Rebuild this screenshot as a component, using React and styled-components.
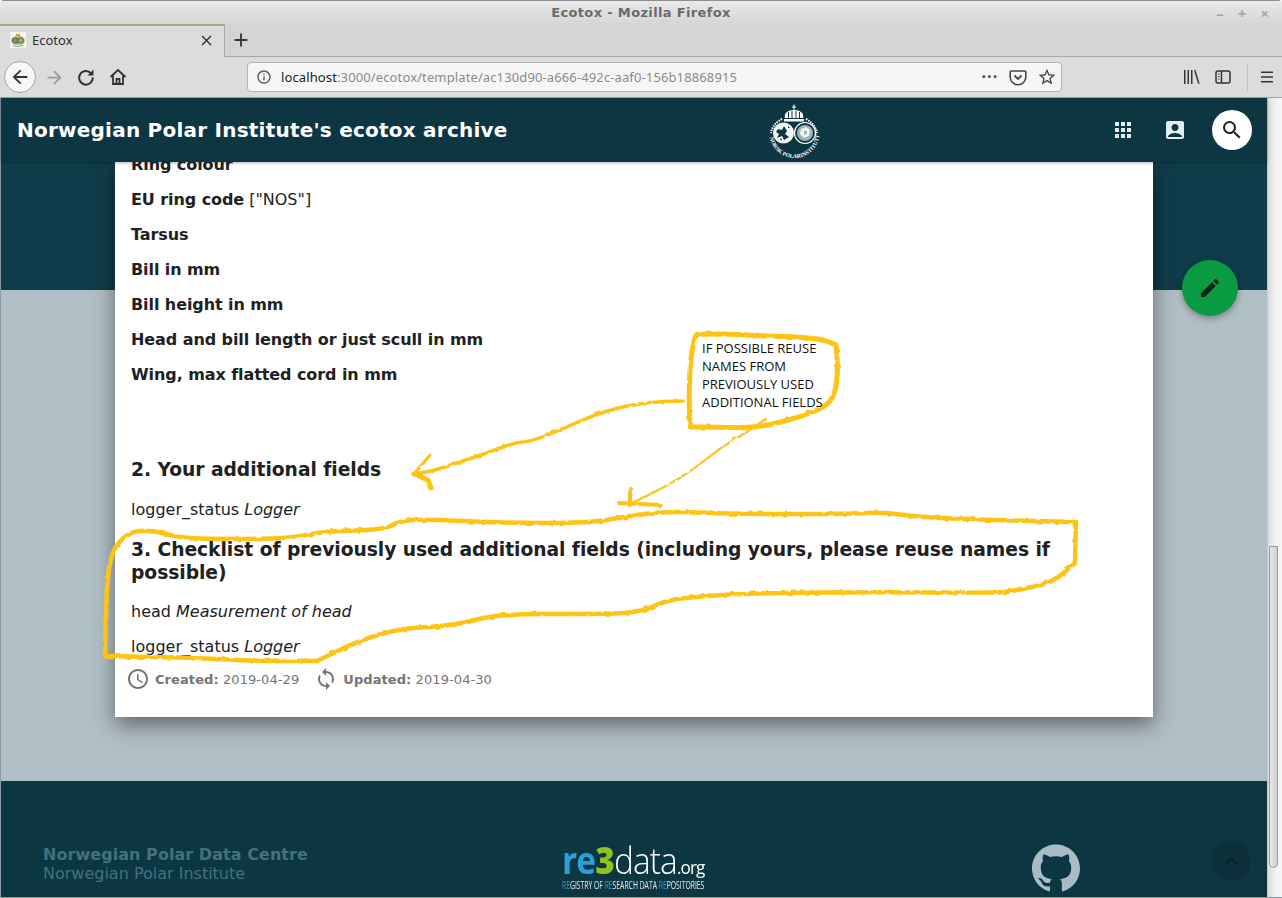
import React from 'react';
import styled, { createGlobalStyle } from 'styled-components';
import { MdApps, MdAccountBox, MdSearch, MdEdit, MdAccessTime, MdSync, MdExpandLess, MdClose, MdAdd, MdArrowBack, MdArrowForward, MdInfoOutline, MdStarBorder } from 'react-icons/md';
import { SiGithub } from 'react-icons/si';

/* -------------------------  STYLES ------------------------- */

const GlobalStyle = createGlobalStyle`
  html, body {
    margin: 0;
    padding: 0;
    background: #fff;
    overflow: hidden;
  }
`;

const Window = styled.div`
  width: 1282px;
  height: 898px;
  box-sizing: border-box;
  display: flex;
  flex-direction: column;
  overflow: hidden;
  border-radius: 4px 4px 0 0;
  border-bottom: 1px solid #8d9aa0;
  font-family: "DejaVu Sans", sans-serif;
`;

const TitleBar = styled.div`
  height: 24px;
  display: flex;
  align-items: center;
  justify-content: center;
  position: relative;
  background: linear-gradient(#e9e9e9, #d6d6d6);
  border-top: 1px solid #8f8f8f;
  box-sizing: border-box;
`;

const TitleText = styled.span`
  font: bold 13px "DejaVu Sans", sans-serif;
  letter-spacing: 0.35px;
  color: #6a6a6a;
`;

const WindowButtons = styled.div`
  position: absolute;
  right: 13px;
  top: 2px;
  display: flex;
  gap: 14px;
  color: #a5a5a5;
  font: bold 15px "Noto Sans", sans-serif;
`;

const TabBar = styled.div`
  height: 33px;
  display: flex;
  align-items: stretch;
  background: #d4d4d4;
  border-bottom: 1px solid #a8a8a8;
  box-sizing: border-box;
`;

const Tab = styled.div`
  width: 225px;
  height: 33px;
  box-sizing: border-box;
  display: flex;
  align-items: center;
  padding: 0 9px 3px 10px;
  gap: 6px;
  background: #dcdcdc;
  border-top: 2px solid #9db08e;
  border-right: 1px solid #a8a8a8;
  font: 13px "Noto Sans", sans-serif;
  color: #303030;
`;

const TabLabel = styled.span`
  flex: 1;
`;

const NewTab = styled.div`
  width: 32px;
  display: flex;
  align-items: center;
  justify-content: center;
  color: #333;
`;

const NavBar = styled.div`
  height: 41px;
  display: flex;
  align-items: center;
  background: #dcdcdc;
  border-bottom: 1px solid #a3a3a3;
  box-sizing: border-box;
  padding-left: 4px;
`;

const BackButton = styled.div`
  width: 32px;
  height: 32px;
  margin-right: 2px;
  border-radius: 50%;
  box-sizing: border-box;
  background: #f7f7f7;
  border: 1px solid #a5a5a5;
  display: flex;
  align-items: center;
  justify-content: center;
  color: #333;
`;

const NavIcon = styled.div`
  width: 32px;
  display: flex;
  align-items: center;
  justify-content: center;
  color: ${(p) => (p.$muted ? '#9a9a9a' : '#333')};
`;

const UrlBar = styled.div`
  width: 815px;
  height: 30px;
  margin-left: 113px;
  box-sizing: border-box;
  display: flex;
  align-items: center;
  padding: 0 4px 0 8px;
  background: #f6f6f6;
  border: 1px solid #b4b4b4;
  border-radius: 4px;
  font: 13px "Noto Sans", sans-serif;
  color: #8a8a8a;
`;

const UrlText = styled.span`
  flex: 1;
  margin-left: 9px;
  letter-spacing: 0.12px;
  b {
    font-weight: 400;
    color: #222;
  }
`;

const UrlActions = styled.div`
  display: flex;
  align-items: center;
  gap: 10px;
  color: #444;
`;

const Dots = styled.span`
  font: bold 8px "DejaVu Sans", sans-serif;
  letter-spacing: 0.5px;
  color: #555;
  margin-right: 1px;
`;

const ToolIcons = styled.div`
  display: flex;
  align-items: center;
  margin-left: 121px;
  gap: 15px;
  color: #333;
`;

const Separator = styled.div`
  width: 1px;
  height: 28px;
  background: #c2c2c2;
  margin: 0 -3px 0 1px;
`;

const Viewport = styled.div`
  height: 799px;
  display: flex;
  position: relative;
`;

const Main = styled.div`
  flex: 1;
  min-width: 0;
  display: flex;
  flex-direction: column;
  border-left: 1px solid #8d9aa0;
`;

const AppBar = styled.header`
  height: 64px;
  flex: none;
  position: relative;
  z-index: 2;
  display: flex;
  align-items: center;
  background: #0d3643;
  box-shadow: 0 1px 3px rgba(0, 0, 0, 0.3);
  padding-left: 16px;
`;

const AppTitle = styled.div`
  width: 751px;
  font-size: 20px;
  font-weight: 700;
  color: #fff;
  letter-spacing: 0.23px;
`;

const AppActions = styled.div`
  display: flex;
  align-items: center;
  margin-left: 289px;
  color: #e4edf0;
  gap: 28px;
`;

const SearchButton = styled.div`
  width: 40px;
  height: 40px;
  margin-left: -3px;
  border-radius: 50%;
  background: #fff;
  color: #222;
  display: flex;
  align-items: center;
  justify-content: center;
`;

const Body = styled.main`
  flex: 1;
  background: linear-gradient(#0f3c4a 128px, #b0bec5 128px);
`;

const Card = styled.article`
  width: 1038px;
  height: 555px;
  margin-left: 114px;
  box-sizing: border-box;
  padding: 0 16px;
  overflow: hidden;
  background: #fff;
  color: #212121;
  box-shadow: 0 8px 20px rgba(0, 0, 0, 0.45);
  font-size: 16px;
`;

const FieldList = styled.div`
  margin-top: -15px;
`;

const Field = styled.div`
  height: 35px;
  display: flex;
  align-items: center;
  white-space: pre;
  b {
    font-weight: 700;
    letter-spacing: -0.08px;
  }
  i {
    font-style: italic;
  }
`;

const SectionTitle = styled.h2`
  margin: ${(p) => p.$top}px 0 ${(p) => p.$bottom}px;
  font-size: 18.72px;
  line-height: 23px;
  font-weight: 700;
  letter-spacing: -0.05px;
`;

const Meta = styled.div`
  margin: 0 0 0 -5px;
  height: 30px;
  display: flex;
  align-items: center;
  font-size: 13px;
  letter-spacing: 0.08px;
  color: #757575;
  b {
    font-weight: 700;
  }
`;

const MetaItem = styled.div`
  display: flex;
  align-items: center;
  gap: 5px;
  margin-right: 15px;
  white-space: pre;
`;

const Footer = styled.footer`
  height: 116px;
  flex: none;
  box-sizing: border-box;
  overflow: hidden;
  background: #0d3643;
  display: grid;
  grid-template-columns: 519px 470px auto;
  padding: 64px 0 0 42px;
  color: #44707f;
`;

const FooterText = styled.div`
  font-size: 16px;
  line-height: 19px;
  b {
    display: block;
    font-weight: 700;
    letter-spacing: 0.05px;
  }
`;

const Re3Logo = styled.div`
  width: 144px;
  margin-top: -1px;
  color: #fff;
`;

const Re3Word = styled.div`
  height: 32px;
  display: flex;
  align-items: baseline;
  font-family: "Open Sans", sans-serif;
  font-size: 37px;
  line-height: 32px;
  letter-spacing: -1px;
  transform: scaleX(0.905);
  transform-origin: 0 0;
`;

const Re3Part = styled.span`
  color: ${(p) => p.$color || '#fff'};
  font-weight: ${(p) => p.$weight || 300};
  font-size: ${(p) => p.$size || 37}px;
`;

const Re3Caption = styled.div`
  font: 10px "Open Sans", sans-serif;
  white-space: nowrap;
  transform: scaleX(0.68);
  transform-origin: 0 0;
  margin-top: 2px;
  color: #e6eef0;
  span {
    color: #2a9fd8;
  }
`;

const GithubLink = styled.div`
  color: #a9bcc4;
  margin-top: -1px;
  height: 48px;
`;

const Fab = styled.div`
  position: absolute;
  left: 1182px;
  top: 162px;
  width: 56px;
  height: 56px;
  z-index: 3;
  border-radius: 50%;
  background: #0a9a41;
  color: #10231a;
  box-shadow: 0 3px 6px rgba(0, 0, 0, 0.3);
  display: flex;
  align-items: center;
  justify-content: center;
`;

const ScrollTop = styled.div`
  position: absolute;
  left: 1211px;
  top: 743px;
  width: 40px;
  height: 40px;
  border-radius: 50%;
  background: #0b303c;
  color: #0a1f27;
  display: flex;
  align-items: center;
  justify-content: center;
`;

const Scrollbar = styled.div`
  width: 15px;
  flex: none;
  box-sizing: border-box;
  background: linear-gradient(90deg, #dcdcdc, #f2f2f2 60%, #f7f7f7);
  border-left: 1px solid #c8c8c8;
  padding: 448px 0 0 1px;
`;

const ScrollThumb = styled.div`
  width: 9px;
  height: 322px;
  box-sizing: border-box;
  border: 1px solid #9a9a9a;
  border-radius: 0 0 5px 5px;
  background: linear-gradient(90deg, #e8e8e8, #d0d0d0);
`;

const Markup = styled.svg`
  position: absolute;
  left: 0;
  top: 0;
  z-index: 1;
  pointer-events: none;
`;

const Note = styled.div`
  position: absolute;
  left: 702px;
  top: 241px;
  z-index: 1;
  font: 13px/18px "Open Sans", sans-serif;
  color: #111;
  white-space: nowrap;
`;

/* -------------------------  DRAWINGS ------------------------- */

const Reload = () => (
  <svg width="18" height="18" viewBox="0 0 18 18" fill="none" stroke="#333" strokeWidth="2">
    <path d="M14 5.200A6.800 6.800 0 1 0 15.800 9.500" />
    <path d="M16.500 1.500v6h-6z" fill="#333" stroke="none" />
  </svg>
);

const Home = () => (
  <svg width="18" height="18" viewBox="0 0 18 18" fill="none" stroke="#333" strokeWidth="1.8">
    <path d="M1.5 9 9 2l7.5 7M4 7.500V16h10V7.500" />
    <path d="M7.500 16v-5h3v5" />
  </svg>
);

const Pocket = () => (
  <svg width="18" height="18" viewBox="0 0 18 18" fill="none" stroke="#444" strokeWidth="1.6">
    <path d="M2 3h14a.8.8 0 0 1 .8.8V9a7.8 7.8 0 0 1-15.600 0V3.800A.8.8 0 0 1 2 3z" />
    <path d="m5.500 7.500 3.500 3.500 3.500-3.500" strokeWidth="1.8" />
  </svg>
);

const Library = () => (
  <svg width="17" height="16" viewBox="0 0 17 16" fill="#333">
    <path d="M1 1h1.500v14H1zM4.500 1H6v14H4.500zM8 1h1.500v14H8z" />
    <path d="m11 1.300 1.400-.5L16.600 14.600l-1.400.5z" />
  </svg>
);

const SidebarIcon = () => (
  <svg width="16" height="16" viewBox="0 0 16 16" fill="none" stroke="#333" strokeWidth="1.500">
    <rect x="1" y="2" width="14" height="12" rx="2" />
    <path d="M6.500 2v12" />
    <path d="M3 5h1.500M3 7.500h1.500M3 10h1.500" strokeWidth="1" />
  </svg>
);

const Hamburger = () => (
  <svg width="14" height="14" viewBox="0 0 14 14" fill="#333">
    <path d="M1 1.500h12V3H1zM1 6.200h12v1.500H1zM1 11h12v1.500H1z" />
  </svg>
);

const Favicon = () => (
  <svg width="16" height="16" viewBox="0 0 16 16">
    <rect width="16" height="16" fill="#f6f6ee" />
    <path d="M5.500 4 6.500 1.500l1.500 1 1.500-1 1 2.500z" fill="#c99a2e" />
    <ellipse cx="8" cy="8.500" rx="7" ry="4.500" fill="#c9b867" />
    <circle cx="5.300" cy="8.500" r="2.800" fill="#7f9a4a" stroke="#3d6a78" />
    <circle cx="10.700" cy="8.500" r="2.800" fill="#a9b05c" stroke="#3d6a78" />
    <path d="M3 13.500q5 2 10 0" stroke="#8aa0a8" fill="none" />
  </svg>
);

const PolarLogo = () => (
  <svg width="54" height="56" viewBox="0 0 54 56">
    <defs>
      <path id="logo-ring" d="M1.500 31a25 25 0 0 0 50 0" fill="none" />
    </defs>
    <path d="M25.500 2.500h1v2h1.500v1h-1.500V8h-1V5.500H24v-1h1.500z" fill="#fff" />
    <path d="M17 16c-1.500-5 3-8 9-8s10.500 3 9 8z" fill="#fff" />
    <path d="M20.500 10v6M24 9v7M28 9v7M31.500 10v6" stroke="#0d3643" strokeWidth="1" />
    <rect x="16" y="17" width="20" height="2.500" fill="#fff" />
    <path d="M14 17C8 20 4 25 3 31M38 17c6 3 10 8 11 14" stroke="#fff" strokeWidth="2" strokeDasharray="1.500 1" fill="none" />
    <circle cx="15.500" cy="31" r="10.500" fill="#f2f5f6" />
    <path d="M10 27l4 1 2-4 3 5-2 3 4 3-5 3-2-4-5 2 2-4-3-2zM12 36l2 1-1 2zM20 24l2 2-2 0z" fill="#0d3643" />
    <circle cx="37" cy="31" r="10.500" fill="none" stroke="#fff" strokeWidth="1.200" />
    <circle cx="37" cy="31" r="8" fill="#9fb2b9" />
    <path d="M33 27l5-2 4 3-1 6-5 2-4-4z" fill="#f2f5f6" />
    <path d="M36 29l3 0 0 3-3 1z" fill="#9fb2b9" />
    <text fontFamily="Liberation Serif, serif" fontSize="5.600" fill="#fff" fontWeight="700">
      <textPath href="#logo-ring" startOffset="6%">NORSK POLARINSTITUTT</textPath>
    </text>
  </svg>
);

// hand-drawn marker strokes, in page coordinates; smoothed so they don't look like polygons
const smooth = (pts, closed) => {
  const mid = (a, b) => [(a[0] + b[0]) / 2, (a[1] + b[1]) / 2];
  const ring = closed ? [...pts, pts[0]] : pts;
  const start = closed ? mid(pts[pts.length - 1], pts[0]) : pts[0];
  let d = `M${start[0]} ${start[1]}`;
  ring.forEach((p, i) => {
    if (i === ring.length - 1) {
      d += closed ? '' : ` L${p[0]} ${p[1]}`;
      return;
    }
    const m = mid(p, ring[i + 1]);
    d += ` Q${p[0]} ${p[1]} ${m[0]} ${m[1]}`;
  });
  return closed ? `${d} Z` : d;
};

// corners are repeated so the curve stays tight there
const BOX = [[700, 334], [730, 334], [765, 336], [800, 337], [825, 340], [836, 345], [836, 345], [838, 370], [835, 395], [825, 407], [800, 417], [770, 425], [745, 428], [715, 427], [690, 427], [690, 427], [690, 427], [689, 400], [690, 365], [693, 345], [696, 335], [696, 335]];
const ARROW_LEFT = [[683, 401], [647, 402], [613, 409], [587, 418], [567, 427], [533, 441], [513, 443], [487, 453], [457, 463], [433, 471], [413, 474]];
const ARROW_DOWN = [[766, 419], [747, 432], [720, 448], [693, 470], [663, 488], [630, 504]];
const LOOP = [[128, 532], [150, 530], [170, 535], [190, 539], [290, 539], [323, 531], [383, 530], [400, 521], [423, 519], [503, 523], [590, 523], [623, 517], [667, 511], [730, 514], [857, 514], [883, 512], [917, 517], [990, 520], [1076, 522], [1076, 522], [1076, 522], [1075, 563], [1075, 563], [1052, 583], [1017, 590], [1000, 593], [890, 592], [750, 593], [680, 598], [660, 603], [637, 613], [590, 614], [497, 614], [453, 626], [403, 628], [360, 640], [317, 661], [317, 661], [257, 661], [200, 658], [105, 656], [105, 656], [105, 656], [106, 600], [110, 553]];

const Annotations = () => (
  <Markup width="1282" height="799" viewBox="0 98 1282 799" fill="none" stroke="#fdc414" strokeLinejoin="round" strokeLinecap="round">
    <defs>
      <filter id="marker" filterUnits="userSpaceOnUse" x="0" y="98" width="1282" height="799">
        <feTurbulence type="fractalNoise" baseFrequency="0.14" numOctaves="2" seed="4" result="noise" />
        <feDisplacementMap in="SourceGraphic" in2="noise" scale="3" />
      </filter>
    </defs>
    <g filter="url(#marker)">
      <path d={smooth(BOX, true)} strokeWidth="5" />
      <path d={smooth(ARROW_LEFT)} strokeWidth="3.500" />
      <path d="M430 455 L414 474" strokeWidth="3" />
      <path d="M414 474 L428 480 L431 488" strokeWidth="5" />
      <path d={smooth(ARROW_DOWN)} strokeWidth="2.200" />
      <path d="M630 488 L630 505 M619 503 L660 505" strokeWidth="4" />
      <path d={smooth(LOOP, true)} strokeWidth="4.500" />
    </g>
  </Markup>
);

/* -------------------------  RENDER ------------------------- */

const App = () => (
  <Window>
    <GlobalStyle />
    <TitleBar>
      <TitleText>Ecotox - Mozilla Firefox</TitleText>
      <WindowButtons>
        <span>–</span>
        <span>+</span>
        <span>×</span>
      </WindowButtons>
    </TitleBar>
    <TabBar>
      <Tab>
        <Favicon />
        <TabLabel>Ecotox</TabLabel>
        <MdClose size={17} />
      </Tab>
      <NewTab><MdAdd size={22} /></NewTab>
    </TabBar>
    <NavBar>
      <BackButton><MdArrowBack size={22} /></BackButton>
      <NavIcon $muted><MdArrowForward size={21} /></NavIcon>
      <NavIcon><Reload /></NavIcon>
      <NavIcon><Home /></NavIcon>
      <UrlBar>
        <MdInfoOutline size={16} color="#555" />
        <UrlText><b>localhost</b>:3000/ecotox/template/ac130d90-a666-492c-aaf0-156b18868915</UrlText>
        <UrlActions>
          <Dots>•••</Dots>
          <Pocket />
          <MdStarBorder size={20} />
        </UrlActions>
      </UrlBar>
      <ToolIcons>
        <Library />
        <SidebarIcon />
        <Separator />
        <Hamburger />
      </ToolIcons>
    </NavBar>
    <Viewport>
      <Main>
        <AppBar>
          <AppTitle>Norwegian Polar Institute's ecotox archive</AppTitle>
          <PolarLogo />
          <AppActions>
            <MdApps size={24} />
            <MdAccountBox size={24} />
            <SearchButton><MdSearch size={24} /></SearchButton>
          </AppActions>
        </AppBar>
        <Body>
          <Card>
            <FieldList>
              <Field><b>Ring colour</b></Field>
              <Field><b>EU ring code</b> ["NOS"]</Field>
              <Field><b>Tarsus</b></Field>
              <Field><b>Bill in mm</b></Field>
              <Field><b>Bill height in mm</b></Field>
              <Field><b>Head and bill length or just scull in mm</b></Field>
              <Field><b>Wing, max flatted cord in mm</b></Field>
            </FieldList>
            <SectionTitle $top={66} $bottom={11}>2. Your additional fields</SectionTitle>
            <Field>logger_status <i>Logger</i></Field>
            <SectionTitle $top={11} $bottom={10}>3. Checklist of previously used additional fields (including yours, please reuse names if possible)</SectionTitle>
            <Field>head <i>Measurement of head</i></Field>
            <Field>logger_status <i>Logger</i></Field>
            <Meta>
              <MetaItem><MdAccessTime size={24} /><span><b>Created:</b> 2019-04-29</span></MetaItem>
              <MetaItem><MdSync size={24} /><span><b>Updated:</b> 2019-04-30</span></MetaItem>
            </Meta>
          </Card>
        </Body>
        <Footer>
          <FooterText>
            <b>Norwegian Polar Data Centre</b>
            Norwegian Polar Institute
          </FooterText>
          <Re3Logo>
            <Re3Word>
              <Re3Part $color="#2a9fd8" $weight={700}>re</Re3Part>
              <Re3Part $color="#8dc21f" $weight={800}>3</Re3Part>
              <Re3Part>data</Re3Part>
              <Re3Part $size={19} $weight={400}>.org</Re3Part>
            </Re3Word>
            <Re3Caption><span>RE</span>GISTRY OF <span>RE</span>SEARCH DATA <span>RE</span>POSITORIES</Re3Caption>
          </Re3Logo>
          <GithubLink><SiGithub size={48} /></GithubLink>
        </Footer>
      </Main>
      <Scrollbar><ScrollThumb /></Scrollbar>
      <Fab><MdEdit size={24} /></Fab>
      <ScrollTop><MdExpandLess size={24} /></ScrollTop>
      <Annotations />
      <Note>
        IF POSSIBLE REUSE<br />
        NAMES FROM<br />
        PREVIOUSLY USED<br />
        ADDITIONAL FIELDS
      </Note>
    </Viewport>
  </Window>
);

export default App;
